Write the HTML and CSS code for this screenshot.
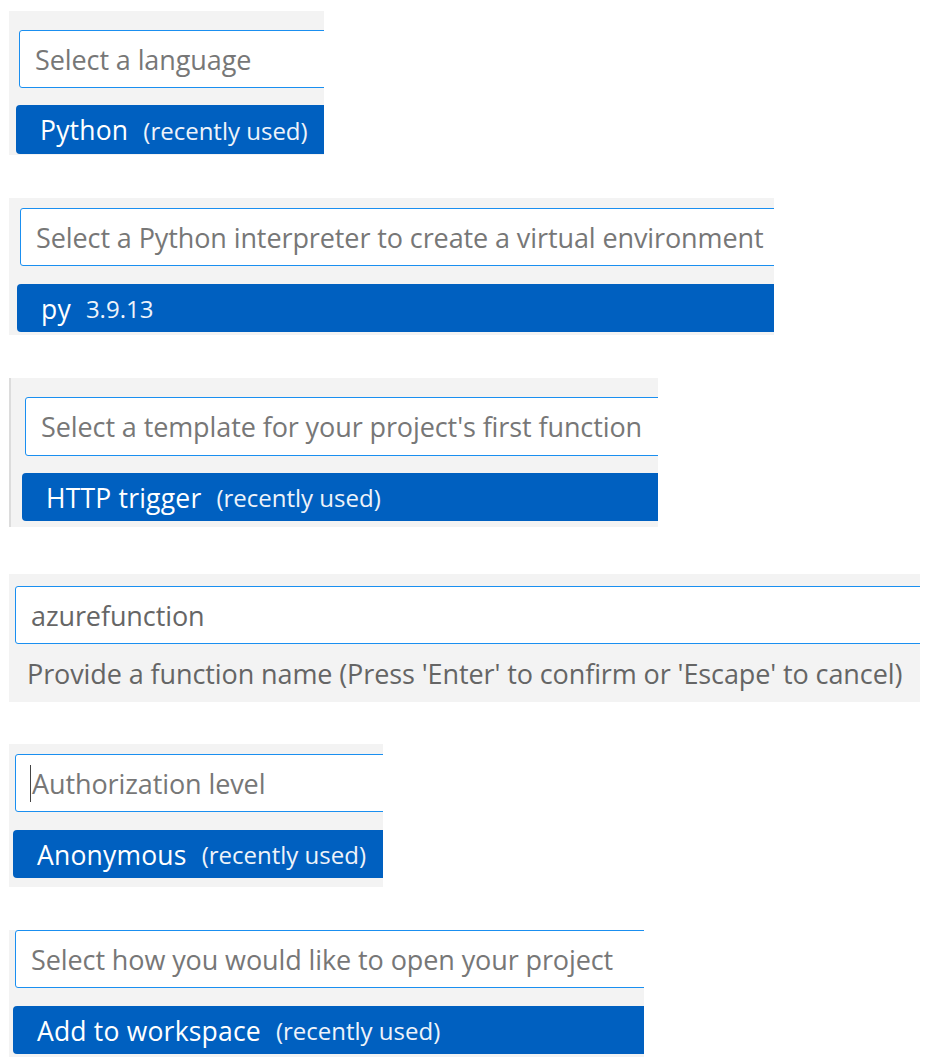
FILE: index.html
```html
<!DOCTYPE html>
<html lang="en">
<head>
<meta charset="utf-8">
<title>Azure Functions quick picks</title>
<link rel="stylesheet" href="styles.css">
</head>
<body>
  <div class="panel p1">
    <div class="input"><span class="placeholder">Select a language</span></div>
    <div class="item"><span class="label">Python</span><span class="desc">(recently used)</span></div>
  </div>

  <div class="panel p2">
    <div class="input"><span class="placeholder">Select a Python interpreter to create a virtual environment</span></div>
    <div class="item"><span class="label">py</span><span class="desc">3.9.13</span></div>
  </div>

  <div class="panel p3">
    <div class="input"><span class="placeholder">Select a template for your project's first function</span></div>
    <div class="item"><span class="label">HTTP trigger</span><span class="desc">(recently used)</span></div>
  </div>

  <div class="panel p4">
    <div class="input"><span class="value">azurefunction</span></div>
    <div class="message">Provide a function name (Press 'Enter' to confirm or 'Escape' to cancel)</div>
  </div>

  <div class="panel p5">
    <div class="input"><span class="caret"></span><span class="placeholder">Authorization level</span></div>
    <div class="item"><span class="label">Anonymous</span><span class="desc">(recently used)</span></div>
  </div>

  <div class="panel p6">
    <div class="input"><span class="placeholder">Select how you would like to open your project</span></div>
    <div class="item"><span class="label">Add to workspace</span><span class="desc">(recently used)</span></div>
  </div>
</body>
</html>
```

FILE: styles.css
```css
* { box-sizing: border-box; }

html, body {
  margin: 0;
  padding: 0;
  background: #ffffff;
}

body {
  font-family: "Open Sans", "Noto Sans", sans-serif;
  width: 932px;
  height: 1061px;
  overflow: hidden;
}

.panel {
  background: #f3f3f3;
  margin-left: 9px;
  overflow: hidden;
  display: flex;
  flex-direction: column;
}

.input {
  height: 58px;
  width: calc(100% + 40px);
  flex: none;
  background: #ffffff;
  border: 1px solid #1a8ff0;
  border-radius: 3px;
  display: flex;
  align-items: center;
  padding-left: 15px;
  font-size: 27px;
  letter-spacing: -0.1px;
  white-space: nowrap;
}

.placeholder { color: #777777; }
.value { color: #666666; }

.caret {
  display: inline-block;
  width: 1px;
  height: 37px;
  background: #444444;
  margin-left: -1px;
  margin-right: 1px;
}

.item {
  height: 48px;
  width: calc(100% + 40px);
  flex: none;
  background: #0060c0;
  border-radius: 4px;
  display: flex;
  align-items: center;
  white-space: nowrap;
  color: #ffffff;
  padding-left: 24px;
  padding-top: 1px;
}

.label {
  font-size: 26.5px;
  letter-spacing: 0.2px;
}

.desc {
  font-size: 24px;
  letter-spacing: 0;
  margin-left: 15px;
  color: #eef3fa;
}

.message {
  color: #656565;
  font-size: 27px;
  letter-spacing: -0.1px;
  white-space: nowrap;
  padding-left: 18px;
  margin-top: 11px;
}

/* individual panels */
.p1 { margin-top: 11px; width: 315px; height: 144px; padding-top: 19px; }
.p1 .input { margin-left: 10px; }
.p1 .item { margin-left: 7px; margin-top: 17px; height: 49px; }

.p2 { margin-top: 43px; width: 765px; height: 137px; padding-top: 10px; }
.p2 .input { margin-left: 11px; }
.p2 .item { margin-left: 8px; margin-top: 18px; }

.p3 {
  margin-top: 43px;
  width: 649px;
  height: 149px;
  padding-top: 19px;
  border-left: 2px solid #dcdcdc;
}
.p3 .input { margin-left: 14px; height: 59px; }
.p3 .item { margin-left: 11px; margin-top: 17px; }

.p4 { margin-top: 47px; width: 911px; height: 128px; padding-top: 12px; }
.p4 .input { margin-left: 6px; }

.p5 { margin-top: 42px; width: 374px; height: 143px; padding-top: 10px; }
.p5 .input { margin-left: 6px; }
.p5 .item { margin-left: 4px; margin-top: 18px; }

.p6 { margin-top: 43px; width: 635px; height: 127px; padding-top: 0; }
.p6 .input { margin-left: 6px; }
.p6 .item { margin-left: 4px; margin-top: 18px; }
```
